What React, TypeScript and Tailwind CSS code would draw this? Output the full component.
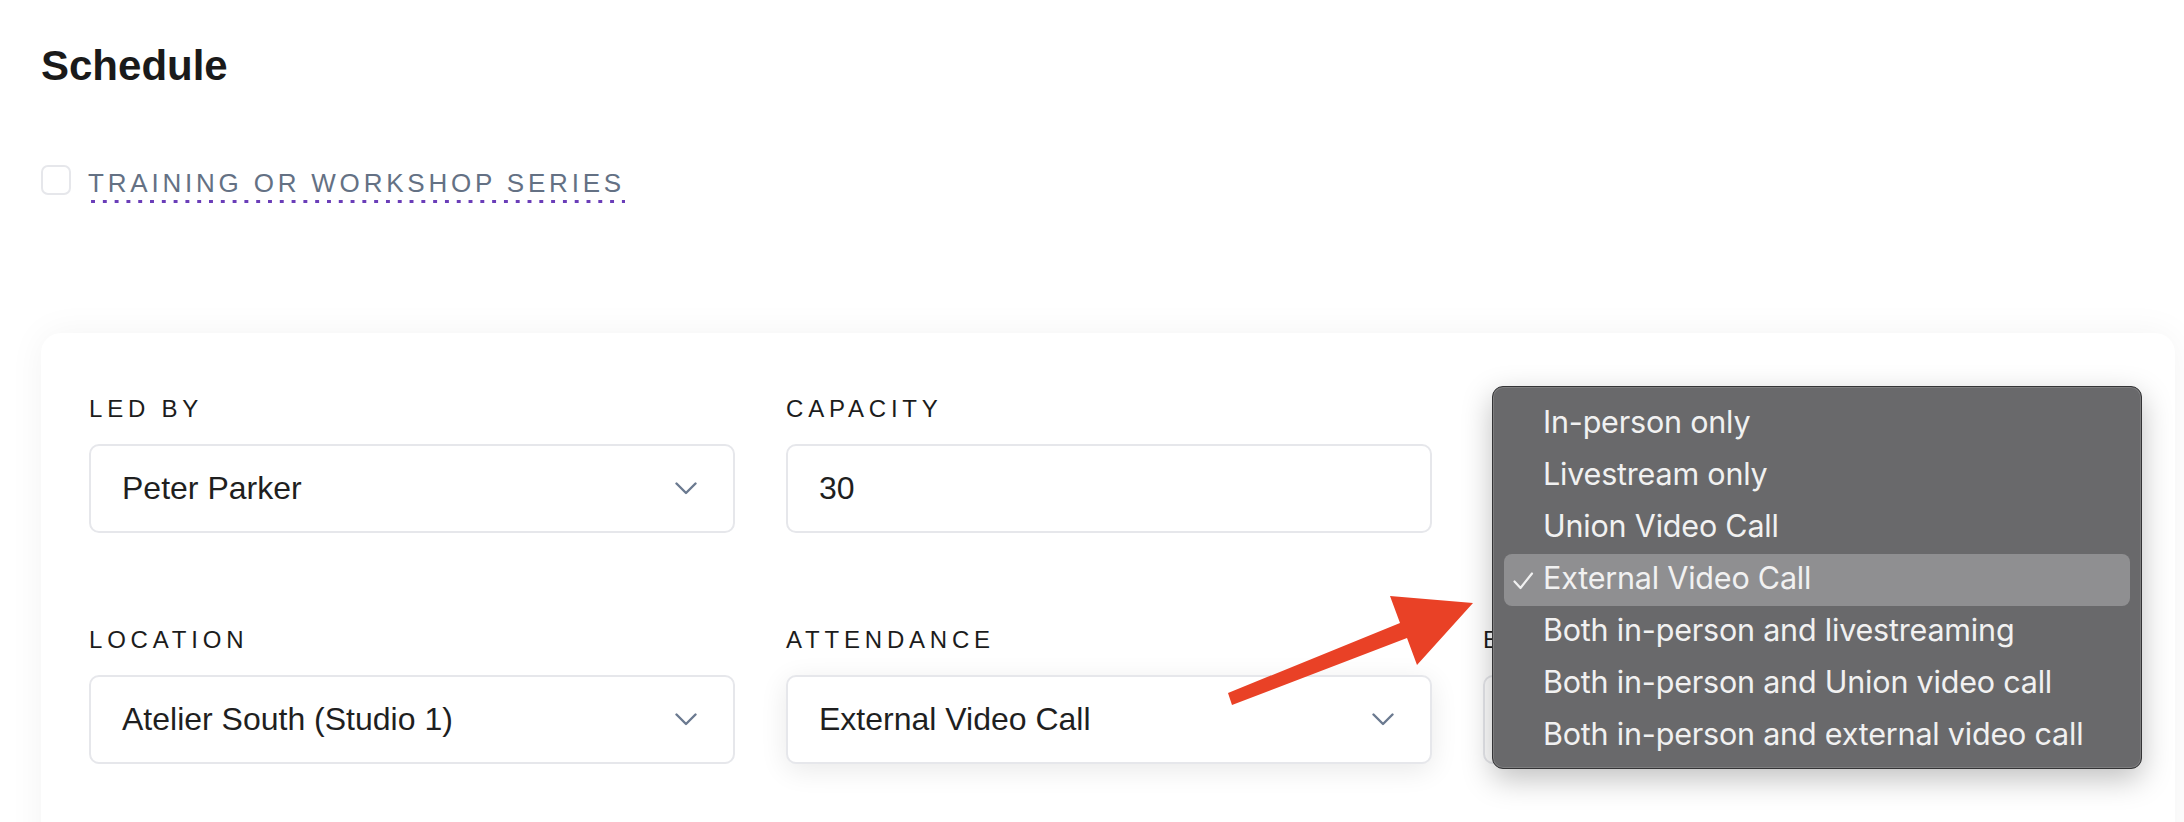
import React from "react";

const Chevron = () => (
  <svg width="22" height="13" viewBox="0 0 22 13" fill="none">
    <path d="M1.5 1.5 L11 11 L20.5 1.5" stroke="#6b7a90" strokeWidth="2.4" strokeLinecap="round" strokeLinejoin="round" />
  </svg>
);

const Label = ({ children }: { children: React.ReactNode }) => (
  <div className="text-[24px] leading-[36px] tracking-[0.2em] uppercase text-[#1c1c1c] mb-[17px] whitespace-nowrap">
    {children}
  </div>
);

const SelectBox = ({ value, focused }: { value: string; focused?: boolean }) => (
  <div
    className={
      "h-[89px] bg-white border-2 border-[#e6e7eb] rounded-[10px] pl-[31px] pr-[36px] flex items-center justify-between " +
      (focused ? "shadow-[0_6px_28px_rgba(0,0,0,0.09)]" : "")
    }
  >
    <span className="text-[32px] text-[#1f1f1f]">{value}</span>
    <Chevron />
  </div>
);

const items = [
  "In-person only",
  "Livestream only",
  "Union Video Call",
  "External Video Call",
  "Both in-person and livestreaming",
  "Both in-person and Union video call",
  "Both in-person and external video call",
];

export default function App() {
  return (
    <div className="relative w-full h-[822px] overflow-hidden bg-white font-['Liberation_Sans',Arial,sans-serif]">
      <div className="pl-[41px] pt-[45px]">
        <h1 className="text-[42px] leading-[42px] font-bold text-[#1a1a1a]">Schedule</h1>

        <div className="mt-[78px] flex items-start">
          <div className="w-[30px] h-[30px] rounded-[7px] border-2 border-[#e6e7eb] bg-white" />
          <div className="ml-[17px] mt-[1.5px]">
            <span className="block text-[26px] leading-[32px] tracking-[3.8px] text-[#647184] pb-[4px] whitespace-nowrap bg-[linear-gradient(to_right,#6a3db8_0,#6a3db8_4px,transparent_4px)] bg-[length:11.8px_3px] bg-repeat-x bg-bottom">
              TRAINING OR WORKSHOP SERIES
            </span>
          </div>
        </div>

        <div className="relative mt-[130px] w-[2134px] bg-white rounded-[20px] shadow-[0_0_36px_rgba(0,0,0,0.05)] pt-[58px] px-[48px] pb-[120px]">
          <div className="grid grid-cols-[646px_646px_646px] gap-x-[51px] gap-y-[89px]">
            <div>
              <Label>Led by</Label>
              <SelectBox value="Peter Parker" />
            </div>
            <div>
              <Label>Capacity</Label>
              <div className="h-[89px] bg-white border-2 border-[#e6e7eb] rounded-[10px] pl-[31px] flex items-center">
                <span className="text-[32px] text-[#1f1f1f]">30</span>
              </div>
            </div>
            <div />
            <div>
              <Label>Location</Label>
              <SelectBox value="Atelier South (Studio 1)" />
            </div>
            <div>
              <Label>Attendance</Label>
              <SelectBox value="External Video Call" focused />
            </div>
            <div>
              <Label>E</Label>
              <div className="h-[89px] bg-white border-2 border-[#e6e7eb] rounded-[10px]" />
            </div>
          </div>

          {/* native select popup */}
          <div className="absolute left-[1451px] top-[53px] w-[650px] h-[383px] rounded-[11px] bg-[#69696b] border border-[#343436] shadow-[inset_0_0_0_1px_rgba(255,255,255,0.14),0_10px_30px_rgba(0,0,0,0.25)] pt-[11px] px-[11px] font-['Inter',sans-serif]">
            {items.map((it) => {
              const sel = it === "External Video Call";
              return (
                <div
                  key={it}
                  className={
                    "relative h-[52px] flex items-center pl-[39px] rounded-[8px] text-[30.5px] tracking-[-0.2px] text-[#f1f1f1] whitespace-nowrap " +
                    (sel ? "bg-[#8f8f91]" : "")
                  }
                >
                  {sel && (
                    <svg className="absolute left-[9px] top-[18px]" width="21" height="18" viewBox="0 0 21 18" fill="none">
                      <path d="M1.5 9.5 L7.5 16 L19 1.5" stroke="#f1f1f1" strokeWidth="2.2" strokeLinecap="round" strokeLinejoin="round" />
                    </svg>
                  )}
                  <span className="pb-[3px]">{it}</span>
                </div>
              );
            })}
          </div>
        </div>
      </div>

      {/* red annotation arrow */}
      <svg className="absolute left-0 top-0 pointer-events-none" width="2184" height="822" viewBox="0 0 2184 822">
        <polygon
          points="1228,693 1400,623 1390,596 1473,603 1417,665 1407,638 1232,705"
          fill="#e94126"
        />
      </svg>
    </div>
  );
}
